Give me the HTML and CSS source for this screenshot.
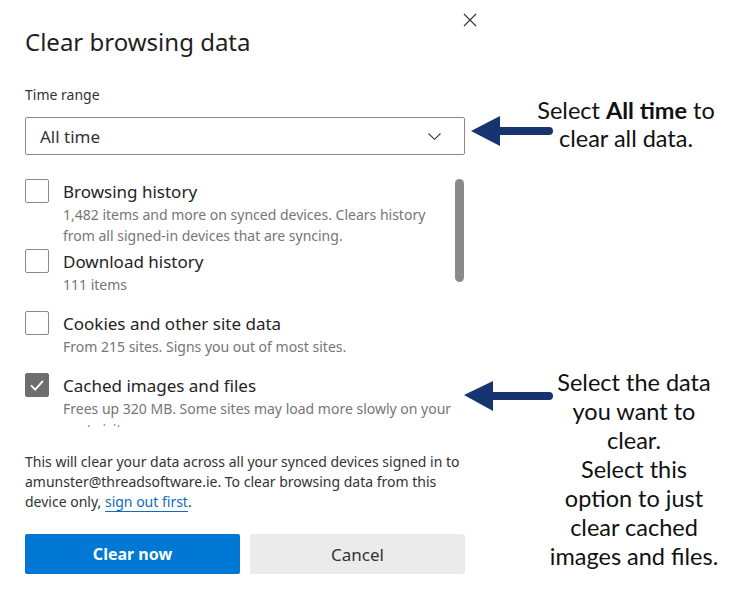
FILE: index.html
```html
<!DOCTYPE html>
<html lang="en">
<head>
    <meta charset="UTF-8">
    <meta name="viewport" content="width=device-width, initial-scale=1">
    <title>Clear browsing data</title>
    <link rel="stylesheet" href="styles.css">
</head>
<body>
    <div class="page">
        <div class="dialog">
            <div class="dialog-header">
                <h1>Clear browsing data</h1>
                <button class="close" aria-label="Close">
                    <svg width="14" height="14" viewBox="0 0 14 14"><path d="M1 1 L13 13 M13 1 L1 13" stroke="#3b3b3b" stroke-width="1.2" fill="none"/></svg>
                </button>
            </div>

            <label class="field-label">Time range</label>
            <div class="select">
                <span>All time</span>
                <svg width="13" height="7" viewBox="0 0 13 7"><path d="M0.5 0.5 L6.5 6.3 L12.5 0.5" stroke="#3b3b3b" stroke-width="1.1" fill="none"/></svg>
            </div>

            <div class="list">
                <div class="items">
                    <div class="item">
                        <span class="box"></span>
                        <div class="item-text">
                            <div class="item-title">Browsing history</div>
                            <div class="item-desc">1,482 items and more on synced devices. Clears history<br>from all signed-in devices that are syncing.</div>
                        </div>
                    </div>
                    <div class="item">
                        <span class="box"></span>
                        <div class="item-text">
                            <div class="item-title">Download history</div>
                            <div class="item-desc">111 items</div>
                        </div>
                    </div>
                    <div class="item">
                        <span class="box"></span>
                        <div class="item-text">
                            <div class="item-title">Cookies and other site data</div>
                            <div class="item-desc">From 215 sites. Signs you out of most sites.</div>
                        </div>
                    </div>
                    <div class="item">
                        <span class="box checked">
                            <svg width="24" height="24" viewBox="0 0 24 24"><path d="M5.5 12.5 L10 17 L18.5 7.5" stroke="#fff" stroke-width="2" fill="none"/></svg>
                        </span>
                        <div class="item-text">
                            <div class="item-title">Cached images and files</div>
                            <div class="item-desc">Frees up 320 MB. Some sites may load more slowly on your<br>next visit.</div>
                        </div>
                    </div>
                </div>
                <div class="scrollbar"></div>
            </div>

            <p class="note">This will clear your data across all your synced devices signed in to<br>amunster@threadsoftware.ie. To clear browsing data from this<br>device only, <a href="#">sign out first</a>.</p>

            <div class="actions">
                <button class="btn primary">Clear now</button>
                <button class="btn">Cancel</button>
            </div>
        </div>

        <!-- callouts drawn over the screenshot -->
        <svg class="arrow arrow-time" width="92" height="38" viewBox="0 0 92 38">
            <polygon points="5,19 34,4 34,34" fill="#16346f"/>
            <line x1="30" y1="19" x2="83" y2="19" stroke="#16346f" stroke-width="8" stroke-linecap="round"/>
        </svg>
        <div class="callout callout-time">Select <b>All time</b> to<br>clear all data.</div>

        <svg class="arrow arrow-cache" width="98" height="36" viewBox="0 0 98 36">
            <polygon points="5,17 34,3 34,33" fill="#16346f"/>
            <line x1="30" y1="18" x2="90" y2="18" stroke="#16346f" stroke-width="8" stroke-linecap="round"/>
        </svg>
        <div class="callout callout-cache">Select the data<br>you want to<br>clear.<br>Select this<br>option to just<br>clear cached<br>images and files.</div>
    </div>
</body>
</html>
```

FILE: styles.css
```css
* {
    margin: 0;
    padding: 0;
    box-sizing: border-box;
}

body {
    font-family: 'Noto Sans', 'Open Sans', sans-serif;
    background: #fff;
    color: #242424;
}

.page {
    position: relative;
    width: 756px;
    height: 615px;
}

.dialog {
    width: 490px;
    padding: 0 25px;
}

.dialog-header {
    display: flex;
    justify-content: space-between;
    align-items: flex-start;
    margin-right: -12px;
}

.dialog-header h1 {
    font-size: 24px;
    font-weight: 400;
    line-height: 28px;
    margin-top: 28px;
    color: #1f1f1f;
}

.close {
    border: none;
    background: none;
    margin-top: 13px;
    width: 14px;
    height: 14px;
}

.field-label {
    display: block;
    font-size: 14px;
    line-height: 20px;
    margin-top: 29px;
    color: #333;
}

.select {
    display: flex;
    justify-content: space-between;
    align-items: center;
    height: 38px;
    margin-top: 12px;
    padding: 0 23px 0 14px;
    border: 1px solid #8a8a8a;
    border-radius: 2px;
    font-size: 17px;
    color: #333;
}

.list {
    display: flex;
    height: 248px;
    margin-top: 24px;
    overflow: hidden;
}

.items {
    flex: 1;
}

.item {
    display: flex;
    gap: 14px;
    min-height: 59px;
    margin-bottom: 3px;
}

.box {
    flex: none;
    width: 24px;
    height: 24px;
    border: 1px solid #8a8a8a;
    border-radius: 2px;
    display: flex;
    align-items: center;
    justify-content: center;
}

.box.checked {
    background: #6e6e6e;
    border-color: #6e6e6e;
}

.item-text {
    padding-top: 1px;
}

.item-title {
    font-size: 17px;
    line-height: 24px;
    color: #242424;
}

.item-desc {
    font-size: 14px;
    line-height: 21px;
    color: #767676;
}

.scrollbar {
    flex: none;
    width: 9px;
    height: 103px;
    margin-right: 1px;
    background: #8a8a8a;
    border-radius: 5px;
}

.note {
    margin-top: 25px;
    font-size: 14px;
    line-height: 20px;
    color: #333;
}

.note a {
    color: #0f6cbd;
    text-decoration: none;
    border-bottom: 1px solid #0f6cbd;
}

.actions {
    display: flex;
    gap: 10px;
    margin-top: 22px;
}

.btn {
    flex: 1;
    height: 40px;
    border: none;
    border-radius: 2px;
    background: #ebebeb;
    color: #333;
    font-family: inherit;
    font-size: 17px;
}

.btn.primary {
    background: #0078d4;
    color: #fff;
    font-size: 16px;
    font-weight: 700;
}

.arrow {
    position: absolute;
}

.arrow-time {
    left: 466px;
    top: 112px;
}

.arrow-cache {
    left: 459px;
    top: 378px;
}

.callout {
    position: absolute;
    font-family: 'Lato', sans-serif;
    font-size: 23.5px;
    color: #111;
    text-align: center;
}

.callout-time {
    left: 526px;
    width: 200px;
    top: 96px;
    line-height: 28px;
}

.callout-cache {
    left: 534px;
    width: 200px;
    top: 368px;
    line-height: 29px;
}
```
